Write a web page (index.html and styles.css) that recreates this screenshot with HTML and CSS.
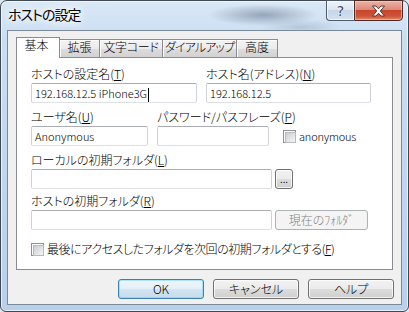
FILE: index.html
```html
<!DOCTYPE html>
<html lang="ja">
<head>
<meta charset="utf-8">
<title>ホストの設定</title>
<link rel="stylesheet" href="styles.css">
</head>
<body>
<div class="window">
  <div class="titlebar">
    <div class="title">ホストの設定</div>
    <div class="caption">
      <div class="cap-btn cap-help"><span class="qmark">?</span></div>
      <div class="cap-btn cap-close">
        <svg width="15" height="12" viewBox="0 0 15 12"><path d="M1.5 1 L5 1 L7.5 3.8 L10 1 L13.5 1 L9.3 6 L13.5 11 L10 11 L7.5 8.2 L5 11 L1.5 11 L5.7 6 Z" fill="#fff" stroke="#4b3833" stroke-width="1" stroke-linejoin="round"/></svg>
      </div>
    </div>
  </div>
  <div class="client">
    <div class="tabs">
      <div class="tab tab-active tw-44">基本</div>
      <div class="tab tw-40">拡張</div>
      <div class="tab tw-63">文字コード</div>
      <div class="tab tw-74">ダイアルアップ</div>
      <div class="tab tw-41">高度</div>
    </div>
    <div class="panel">
      <div class="row">
        <div class="field fw-166">
          <div class="label">ホストの設定名(<u>T</u>)</div>
          <div class="input">192.168.12.5 iPhone3G<span class="caret"></span></div>
        </div>
        <div class="field fw-165">
          <div class="label">ホスト名(アドレス)(<u>N</u>)</div>
          <div class="input">192.168.12.5</div>
        </div>
      </div>
      <div class="row row-gap">
        <div class="field fw-117">
          <div class="label">ユーザ名(<u>U</u>)</div>
          <div class="input">Anonymous</div>
        </div>
        <div class="field fw-112">
          <div class="label">パスワード/パスフレーズ(<u>P</u>)</div>
          <div class="input"></div>
        </div>
        <div class="checkline anon">
          <span class="check"></span><span class="latin">anonymous</span>
        </div>
      </div>
      <div class="field row-gap">
        <div class="label">ローカルの初期フォルダ(<u>L</u>)</div>
        <div class="inline">
          <div class="input fw-241"></div>
          <div class="btn btn-browse">...</div>
        </div>
      </div>
      <div class="field row-gap-sm">
        <div class="label">ホストの初期フォルダ(<u>R</u>)</div>
        <div class="inline">
          <div class="input fw-241"></div>
          <div class="btn btn-disabled btn-current">現在のﾌｫﾙﾀﾞ</div>
        </div>
      </div>
      <div class="checkline last">
        <span class="check"></span><span class="tight">最後にアクセスしたフォルダを次回の初期フォルダとする(<u>F</u>)</span>
      </div>
    </div>
    <div class="buttons">
      <div class="btn btn-default">OK</div>
      <div class="btn">キャンセル</div>
      <div class="btn">ヘルプ</div>
    </div>
  </div>
</div>
</body>
</html>
```

FILE: styles.css
```css
* { box-sizing: border-box; }
html, body { margin: 0; padding: 0; }
body {
  width: 409px;
  height: 312px;
  overflow: hidden;
  background: #dfe6ee;
  font-family: "Noto Sans CJK JP", "Noto Sans", sans-serif;
  font-size: 12px;
  font-weight: 300;
  line-height: 14px;
  color: #000;
  font-feature-settings: "palt" 1;
}
u { text-decoration: underline; text-underline-offset: 1px; }

.window {
  width: 409px;
  height: 312px;
  border: 1px solid #3d4756;
  border-radius: 7px 7px 6px 6px;
  background:
    radial-gradient(ellipse 55px 11px at 262px 14px, rgba(88,104,128,.5), rgba(88,104,128,0)),
    radial-gradient(ellipse 40px 8px at 300px 26px, rgba(120,140,165,.3), rgba(120,140,165,0)),
    linear-gradient(180deg, #dae8f6 0%, #cadef2 12%, #c0d6ee 60%, #b9d0ea 100%);
  box-shadow: inset 0 0 0 1px rgba(255,255,255,.65);
  padding: 0 6px 6px;
  display: flex;
  flex-direction: column;
}

.titlebar {
  height: 29px;
  display: flex;
  justify-content: space-between;
  align-items: flex-start;
  flex: none;
}
.title {
  font-size: 14px;
  font-weight: 400;
  line-height: 18px;
  letter-spacing: -1px;
  padding: 4px 0 0 1px;
  text-shadow: 0 0 6px #fff, 0 0 10px #fff, 0 0 14px #fff;
}
.caption {
  display: flex;
  margin-top: -1px;
  margin-right: -1px;
}
.cap-btn {
  height: 21px;
  border: 1px solid #4c5a6d;
  display: flex;
  align-items: center;
  justify-content: center;
}
.cap-help {
  width: 28px;
  border-right: none;
  border-radius: 0 0 0 4px;
  background: linear-gradient(180deg, #eef3f9 0%, #dde7f2 45%, #c6d5e7 50%, #d3e1f0 100%);
  box-shadow: inset 0 0 0 1px rgba(255,255,255,.7);
}
.qmark {
  font-family: "DejaVu Sans", sans-serif;
  font-weight: normal;
  font-size: 14px;
  line-height: 14px;
  color: #3a4b60;
  text-shadow: 0 0 2px #fff, 0 0 1px #fff;
}
.cap-close {
  width: 49px;
  border-color: #4a2a24;
  border-radius: 0 0 4px 0;
  background: linear-gradient(180deg, #eab3a6 0%, #de8a78 45%, #c8442e 50%, #cf5438 80%, #e08a6a 100%);
  box-shadow: inset 0 0 0 1px rgba(255,215,205,.5);
}

.client {
  flex: 1;
  border: 1px solid #7b8898;
  background: #f0f0f0;
  padding: 6px 8px 0 8px;
  display: flex;
  flex-direction: column;
}

.tabs {
  display: flex;
  align-items: flex-end;
  height: 21px;
  margin-bottom: -1px;
  position: relative;
  z-index: 1;
}
.tab {
  height: 18px;
  margin-bottom: 1px;
  border: 1px solid #898c95;
  border-left: none;
  border-bottom: none;
  background: linear-gradient(180deg, #f3f3f3 0%, #ebebeb 50%, #dddddd 51%, #d2d2d2 100%);
  box-shadow: inset 1px 1px 0 #fbfbfb;
  text-align: center;
  line-height: 14px;
  white-space: nowrap;
}
.tab-active {
  height: 21px;
  margin-bottom: 0;
  border-left: 1px solid #898c95;
  background: #fff;
  box-shadow: none;
  line-height: 14px;
  padding: 0 3px 0 0;
}
.tw-44 { width: 44px; }
.tw-40 { width: 40px; }
.tw-63 { width: 63px; letter-spacing: -0.3px; }
.tw-74 { width: 74px; letter-spacing: -0.9px; }
.tw-41 { width: 41px; }

.panel {
  height: 213px;
  border: 1px solid #898c95;
  background: #fff;
  padding: 9px 14px 0;
  flex: none;
}
.row {
  display: flex;
  gap: 9px;
}
.row-gap { margin-top: 7px; }
.row-gap-sm { margin-top: 5px; }
.field {
  display: flex;
  flex-direction: column;
}
.fw-166 { width: 166px; }
.fw-165 { width: 165px; }
.fw-117 { width: 117px; }
.fw-112 { width: 112px; }
.fw-241 { width: 241px; }
.label {
  height: 14px;
  margin-bottom: 2px;
  white-space: nowrap;
}
.input {
  height: 20px;
  border: 1px solid;
  border-color: #a9acb2 #cfd2d8 #dde1e6 #cfd2d8;
  border-radius: 2px;
  background: #fff;
  padding: 0 3px;
  font-size: 11px;
  line-height: 18px;
  white-space: nowrap;
  overflow: hidden;
}
.caret {
  display: inline-block;
  width: 1px;
  height: 15px;
  background: #000;
  vertical-align: middle;
  margin-left: 1px;
}
.inline {
  display: flex;
  gap: 3px;
}

.checkline {
  display: flex;
  align-items: center;
  gap: 3px;
  white-space: nowrap;
}
.latin {
  font-size: 11px;
  letter-spacing: -0.2px;
}
.tight { letter-spacing: -0.45px; }
.anon {
  align-self: flex-end;
  height: 20px;
  margin-left: 5px;
}
.last {
  margin-top: 12px;
  height: 14px;
}
.check {
  width: 13px;
  height: 13px;
  flex: none;
  border: 1px solid #8e8f8f;
  background: #fff;
  padding: 1px;
}
.check::before {
  content: "";
  display: block;
  width: 9px;
  height: 9px;
  border: 1px solid #b7bbc0;
  background: linear-gradient(135deg, #c9cdd2 0%, #e2e4e7 55%, #f5f5f5 100%);
}

.btn {
  height: 20px;
  border: 1px solid #707070;
  border-radius: 3px;
  background: linear-gradient(180deg, #f2f2f2 0%, #ebebeb 49%, #dddddd 50%, #cfcfcf 100%);
  box-shadow: inset 0 0 0 1px rgba(255,255,255,.75);
  display: flex;
  align-items: center;
  justify-content: center;
  line-height: 14px;
  white-space: nowrap;
  flex: none;
}
.btn-browse {
  width: 18px;
  font-size: 11px;
  align-items: flex-end;
  padding-bottom: 3px;
}
.btn-current { width: 93px; }
.btn-disabled {
  border-color: #adb2b5;
  background: #f4f4f4;
  box-shadow: none;
  color: #838383;
}
.buttons {
  display: flex;
  justify-content: flex-end;
  gap: 9px;
  margin-top: 9px;
  margin-right: -1px;
}
.buttons .btn { width: 86px; }
.btn-default {
  border-color: #3c7fb1;
  background: linear-gradient(180deg, #eef6fb 0%, #e3eff8 49%, #d2e5f2 50%, #c5dcec 100%);
  box-shadow: inset 0 0 0 1px rgba(120,210,250,.55);
}
```
